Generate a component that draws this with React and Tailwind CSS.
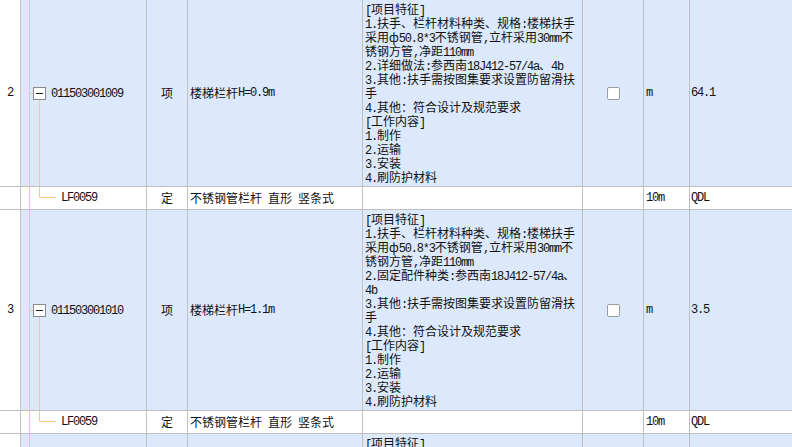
import React from 'react';

// ASCII runs get a narrow mono face (half-width), everything else the CJK face
function Txt({ s }) {
    const parts = s.match(/[\x00-\x7F]+|[^\x00-\x7F]+/g) || [];
    return parts.map((p, i) =>
        /^[\x00-\x7F]/.test(p)
            ? <span key={i} className="font-[family-name:'Liberation_Mono',monospace] tracking-[-1.2px] whitespace-pre">{p}</span>
            : <span key={i}>{p}</span>
    );
}

const line = "absolute w-px bg-[#f7c98e]";
const hline = "absolute h-px bg-[#f7c98e]";

const ItemRow = ({ no, code, name, lines, unit, qty }) => (
    <div className="flex border-b border-[#c0c0c0]">
        <div className="w-[21px] shrink-0 bg-white border-r border-[#c0c0c0] flex items-center justify-center">
            <Txt s={no} />
        </div>
        <div className="w-[126px] shrink-0 relative bg-[#dce9fc] border-r border-[#c0c0c0] flex items-center pl-[12px]">
            <span className={`${line} left-[8px] top-0 bottom-0`} />
            <span className={`${hline} left-[8px] top-1/2 w-[10px]`} />
            <span className={`${line} left-[18px] top-1/2 bottom-0`} />
            <span className="relative z-10 w-[13px] h-[13px] border border-[#8a8a8a] bg-white flex items-center justify-center">
                <span className="w-[7px] h-px bg-[#222]" />
            </span>
            <span className="ml-[5px]"><Txt s={code} /></span>
        </div>
        <div className="w-[41px] shrink-0 bg-[#dce9fc] border-r border-[#c0c0c0] flex items-center justify-center">项</div>
        <div className="w-[175px] shrink-0 bg-[#dce9fc] border-r border-[#c0c0c0] flex items-center pl-[2px]">
            <Txt s={name} />
        </div>
        <div className="w-[220px] shrink-0 bg-[#dce9fc] border-r border-[#c0c0c0] py-[2px] pl-[2px]">
            {lines.map((l, i) => <div key={i} className="h-[14px] whitespace-nowrap"><Txt s={l} /></div>)}
        </div>
        <div className="w-[61px] shrink-0 bg-[#dce9fc] border-r border-[#c0c0c0] flex items-center justify-center">
            <span className="w-[13px] h-[13px] rounded-[2px] border border-[#9c9c9c] bg-white" />
        </div>
        <div className="w-[46px] shrink-0 bg-[#dce9fc] border-r border-[#c0c0c0] flex items-center pl-[2px]">
            <Txt s={unit} />
        </div>
        <div className="flex-1 bg-[#dce9fc] flex items-center pl-[1px]">
            <Txt s={qty} />
        </div>
    </div>
);

const SubRow = ({ code, type, name, unit, qty }) => (
    <div className="flex h-[23px] border-b border-[#c0c0c0] bg-white">
        <div className="w-[21px] shrink-0 border-r border-[#c0c0c0]" />
        <div className="w-[126px] shrink-0 relative border-r border-[#c0c0c0] flex items-center pl-[40px]">
            <span className={`${line} left-[8px] top-0 bottom-0`} />
            <span className={`${line} left-[18px] top-0 h-[11px]`} />
            <span className={`${hline} left-[18px] top-[10px] w-[17px]`} />
            <Txt s={code} />
        </div>
        <div className="w-[41px] shrink-0 border-r border-[#c0c0c0] flex items-center justify-center">{type}</div>
        <div className="w-[175px] shrink-0 border-r border-[#c0c0c0] flex items-center pl-[2px]">
            <Txt s={name} />
        </div>
        <div className="w-[220px] shrink-0 border-r border-[#c0c0c0]" />
        <div className="w-[61px] shrink-0 border-r border-[#c0c0c0]" />
        <div className="w-[46px] shrink-0 border-r border-[#c0c0c0] flex items-center pl-[2px]">
            <Txt s={unit} />
        </div>
        <div className="flex-1 flex items-center pl-[1px]">
            <Txt s={qty} />
        </div>
    </div>
);

const common = [
    "[项目特征]",
    "1.扶手、栏杆材料种类、规格:楼梯扶手",
    "采用ф50.8*3不锈钢管,立杆采用30mm不",
    "锈钢方管,净距110mm",
];
const tail = [
    "3.其他:扶手需按图集要求设置防留滑扶",
    "手",
    "4.其他：符合设计及规范要求",
    "[工作内容]",
    "1.制作",
    "2.运输",
    "3.安装",
    "4.刷防护材料",
];

const rows = [
    {
        no: "2", code: "011503001009", name: "楼梯栏杆H=0.9m", unit: "m", qty: "64.1",
        lines: [...common, "2.详细做法:参西南18J412-57/4a、4b", ...tail],
    },
    {
        no: "3", code: "011503001010", name: "楼梯栏杆H=1.1m", unit: "m", qty: "3.5",
        lines: [...common, "2.固定配件种类:参西南18J412-57/4a、", "4b", ...tail],
    },
];

export default function App() {
    return (
        <div className="w-full h-screen overflow-hidden bg-white text-[12px] leading-[14px] text-[#111] font-[family-name:'Noto_Sans_CJK_SC','Noto_Sans',sans-serif]">
            {rows.map((r) => (
                <React.Fragment key={r.no}>
                    <ItemRow {...r} />
                    <SubRow code="LF0059" type="定" name="不锈钢管栏杆 直形 竖条式" unit="10m" qty="QDL" />
                </React.Fragment>
            ))}
            {/* next item, cut off at the bottom */}
            <div className="flex h-[80px]">
                <div className="w-[21px] shrink-0 bg-white border-r border-[#c0c0c0]" />
                <div className="w-[126px] shrink-0 relative bg-[#dce9fc] border-r border-[#c0c0c0]">
                    <span className={`${line} left-[8px] top-0 bottom-0`} />
                </div>
                <div className="w-[41px] shrink-0 bg-[#dce9fc] border-r border-[#c0c0c0]" />
                <div className="w-[175px] shrink-0 bg-[#dce9fc] border-r border-[#c0c0c0]" />
                <div className="w-[220px] shrink-0 bg-[#dce9fc] border-r border-[#c0c0c0] py-[2px] pl-[2px]">
                    <div className="h-[14px]"><Txt s="[项目特征]" /></div>
                </div>
                <div className="w-[61px] shrink-0 bg-[#dce9fc] border-r border-[#c0c0c0]" />
                <div className="w-[46px] shrink-0 bg-[#dce9fc] border-r border-[#c0c0c0]" />
                <div className="flex-1 bg-[#dce9fc]" />
            </div>
        </div>
    );
}
